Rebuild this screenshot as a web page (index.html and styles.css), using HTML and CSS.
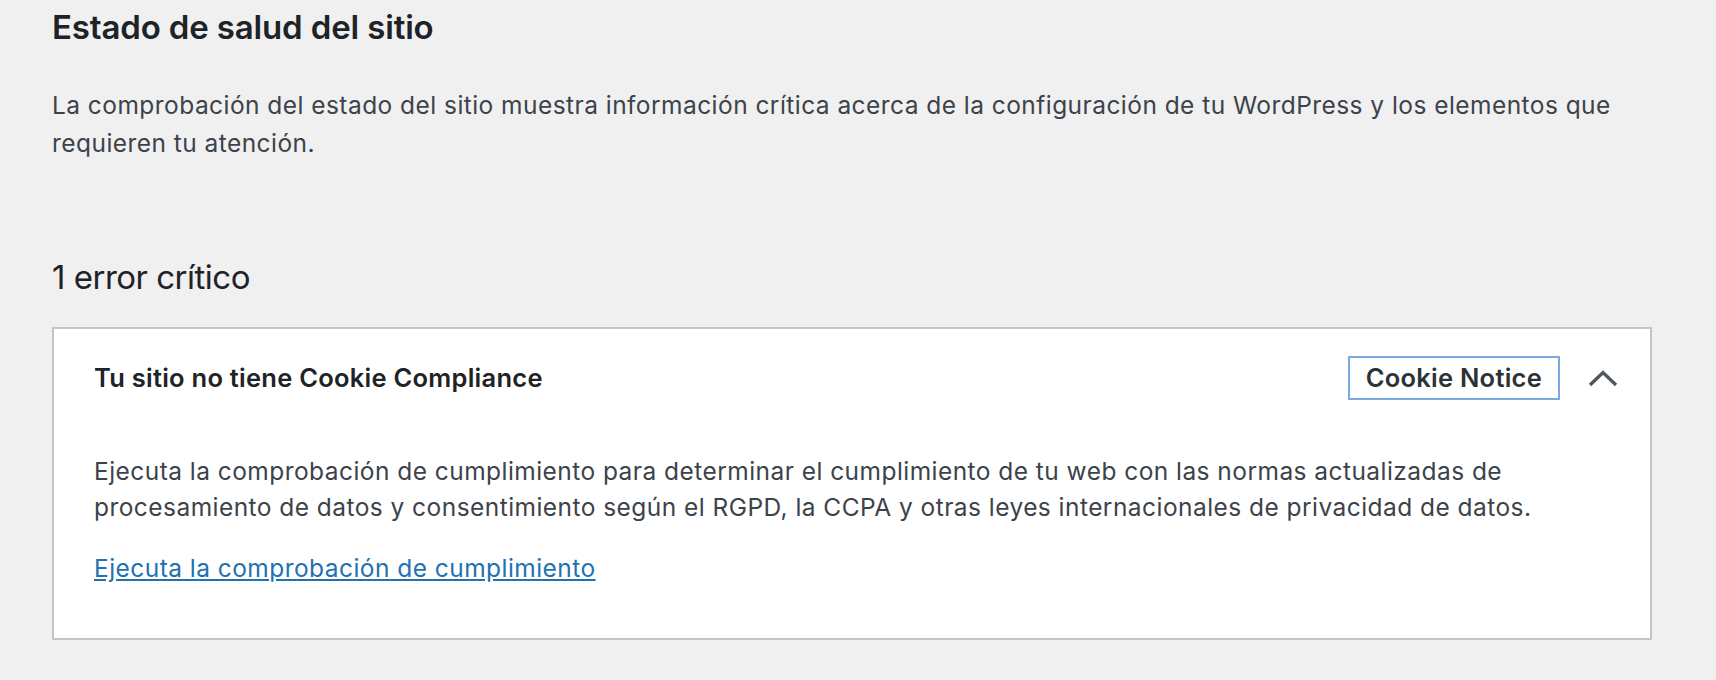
FILE: index.html
```html
<!DOCTYPE html>
<html lang="es">
<head>
    <meta charset="UTF-8">
    <meta name="viewport" content="width=device-width, initial-scale=1.0">
    <title>Estado de salud del sitio</title>
    <link rel="stylesheet" href="styles.css">
</head>
<body>
    <div class="wrap">
        <h1 class="page-title">Estado de salud del sitio</h1>
        <p class="intro">La comprobación del estado del sitio muestra información crítica acerca de la configuración de tu WordPress y los elementos que requieren tu atención.</p>

        <h2 class="issues-count">1 error crítico</h2>

        <div class="issue">
            <div class="issue-head">
                <h3 class="issue-title">Tu sitio no tiene Cookie Compliance</h3>
                <span class="badge">Cookie Notice</span>
                <button class="toggle" aria-expanded="true">
                    <svg width="30" height="18" viewBox="0 0 30 18">
                        <polyline points="2,16 15,3.5 28,16" fill="none" stroke="#50575e" stroke-width="3.4"/>
                    </svg>
                </button>
            </div>
            <div class="issue-body">
                <p>Ejecuta la comprobación de cumplimiento para determinar el cumplimiento de tu web con las normas actualizadas de procesamiento de datos y consentimiento según el RGPD, la CCPA y otras leyes internacionales de privacidad de datos.</p>
                <p class="issue-link"><a href="#">Ejecuta la comprobación de cumplimiento</a></p>
            </div>
        </div>
    </div>
</body>
</html>
```

FILE: styles.css
```css
body {
    margin: 0;
    padding: 0;
    background: #f0f0f1;
    color: #3c434a;
    font-family: Inter, "Noto Sans", sans-serif;
}
.wrap {
    padding: 0 64px 0 52px;
}
.page-title {
    margin: 0;
    padding-top: 5px;
    font-size: 33px;
    line-height: 44px;
    font-weight: 600;
    letter-spacing: -0.15px;
    color: #1d2327;
}
.intro {
    margin: 38px 0 0;
    font-size: 24.5px;
    line-height: 37.5px;
    letter-spacing: 0.45px;
}
.issues-count {
    margin: 93px 0 0;
    font-size: 33px;
    line-height: 44px;
    font-weight: 400;
    letter-spacing: -0.5px;
    color: #1d2327;
}
.issue {
    margin-top: 28px;
    background: #fff;
    border: 2px solid #c3c4c7;
}
.issue-head {
    display: flex;
    align-items: center;
    padding: 27px 32px 26px 40px;
}
.issue-title {
    flex: 1;
    margin: 0;
    font-size: 25.5px;
    line-height: 44px;
    font-weight: 600;
    letter-spacing: 0.25px;
    color: #1d2327;
}
.badge {
    border: 2px solid #7aaae0;
    padding: 0 16px;
    font-size: 25.5px;
    line-height: 40px;
    font-weight: 600;
    letter-spacing: 0.25px;
    color: #2c3338;
}
.toggle {
    display: flex;
    margin-left: 28px;
    padding: 0;
    border: none;
    background: none;
    cursor: pointer;
}
.issue-body {
    padding: 27px 40px 52px;
}
.issue-body p {
    margin: 0;
    font-size: 24.5px;
    line-height: 36px;
    letter-spacing: 0.45px;
}
.issue-body .issue-link {
    margin-top: 25px;
}
.issue-link a {
    color: #2271b1;
}
```
